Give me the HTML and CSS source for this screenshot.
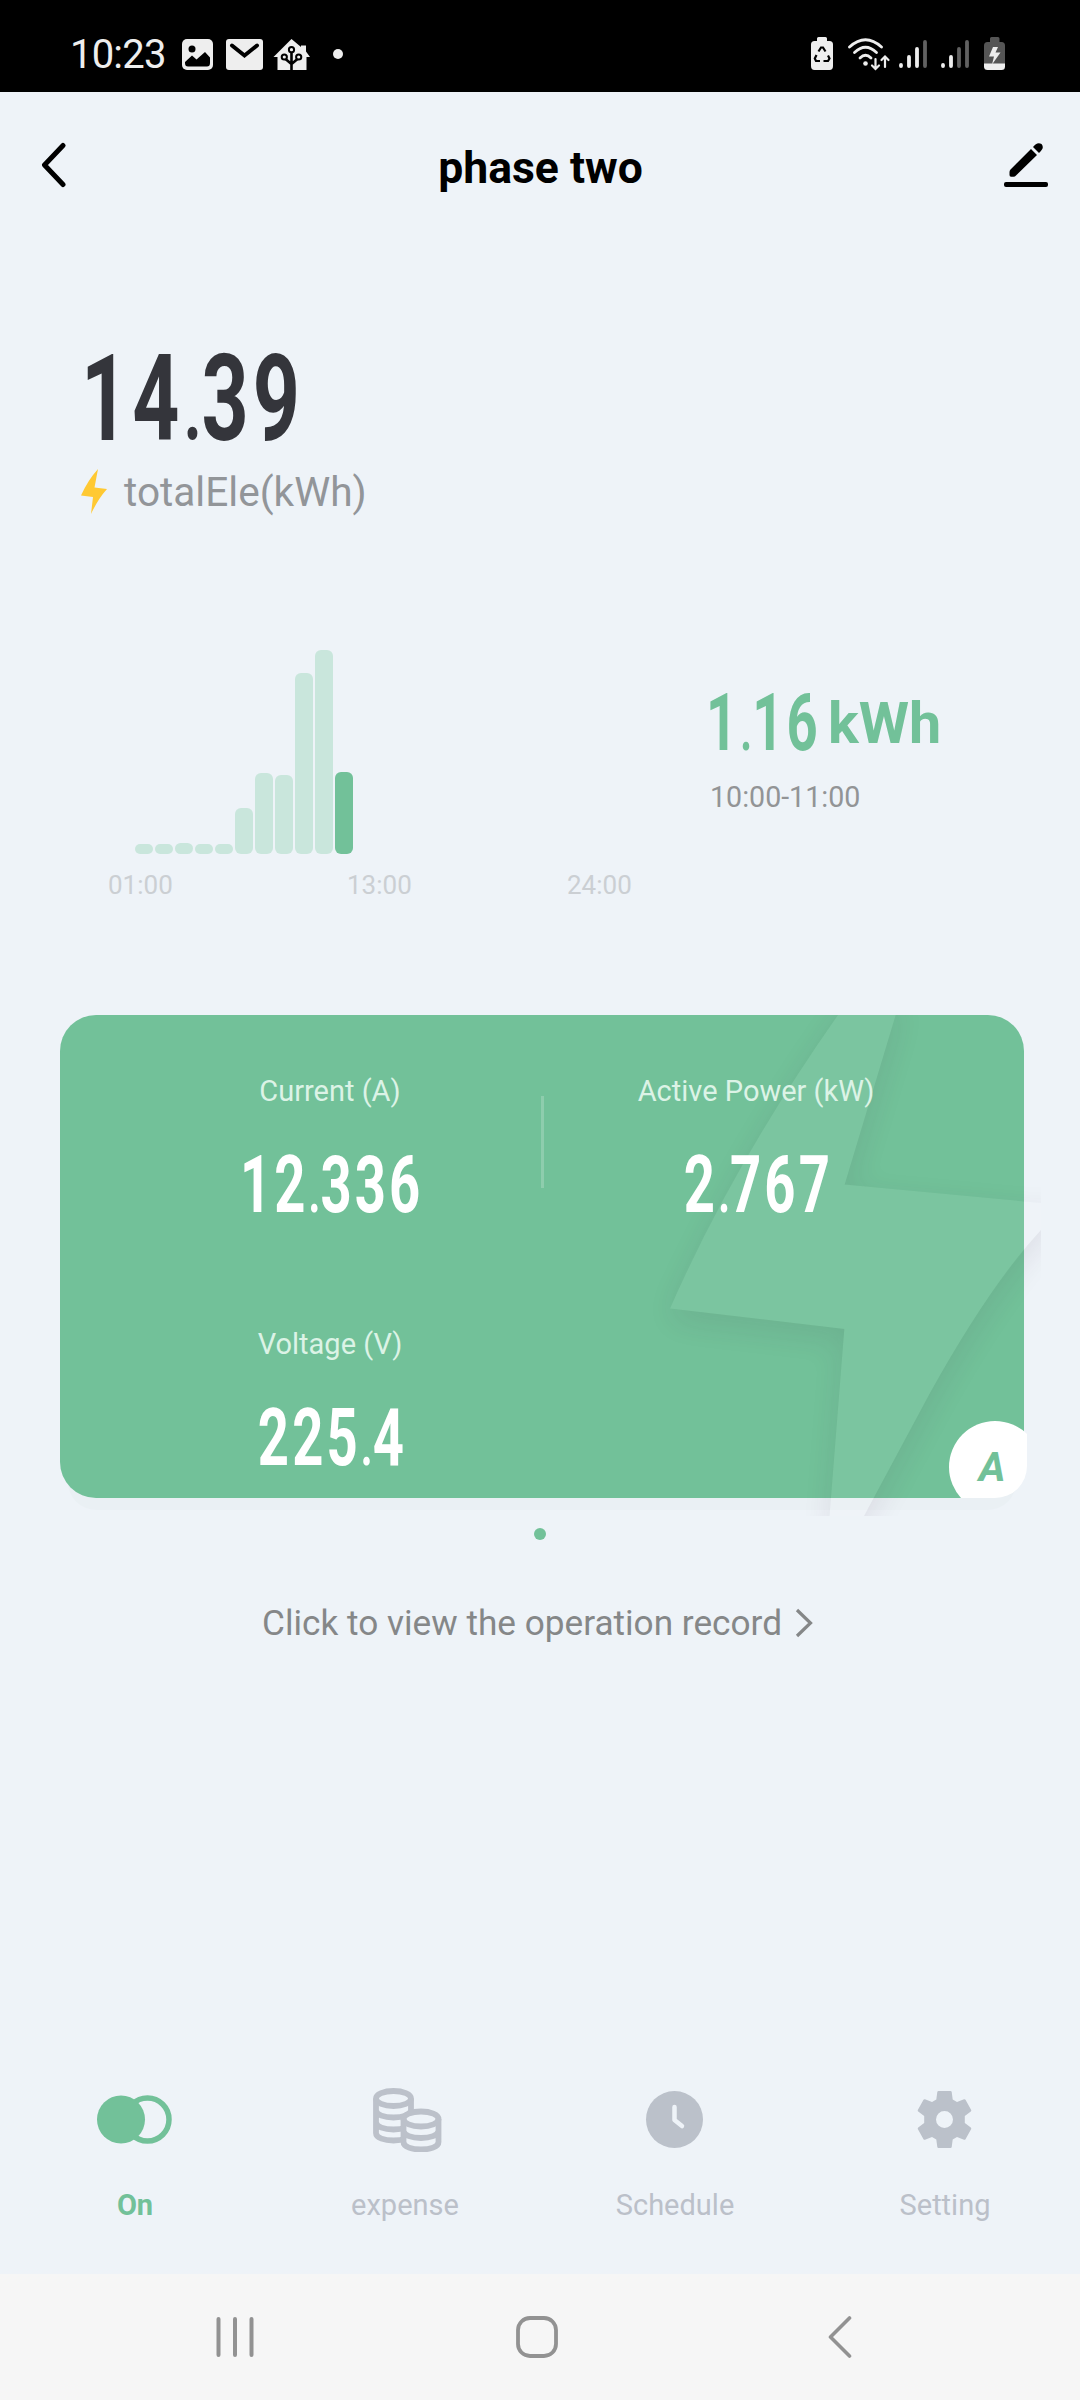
FILE: index.html
```html
<!DOCTYPE html>
<html lang="en">
<head>
  <meta charset="UTF-8">
  <meta name="viewport" content="width=device-width, initial-scale=1.0">
  <title>phase two</title>
  <link rel="stylesheet" href="styles.css">
</head>
<body>

  <div class="status-bar">
    <span class="time">10:23</span>
    <svg class="notifications" width="162" height="34" viewBox="0 0 162 34">
      <rect x="0" y="2" width="31" height="31" rx="5" fill="#eee"/>
      <circle cx="10" cy="12" r="3.5"/>
      <path d="M3 25 L10 18.500 L14.500 22.500 L23 15 L28 20.500 V26 Q28 29.500 25 29.500 H6 Q3 29.500 3 26 Z"/>
      <rect x="44" y="2" width="37" height="31" rx="3" fill="#eee"/>
      <path d="M50 8.500 L62.500 18.500 L75 8.500" fill="none" stroke="#000" stroke-width="4" stroke-linecap="round"/>
      <path d="M109.500 2 L119 10 V8.500 H124 V14.500 L128 20 H124.500 V33 H95.500 V20 H91.500 Z" fill="#eee"/>
      <g fill="none" stroke="#000" stroke-width="2">
        <path d="M109.500 16 V33 M103.500 22 L109.500 27 L115.500 22" stroke-width="2.600"/>
        <circle cx="109.500" cy="12.700" r="2.600" fill="#eee"/>
        <circle cx="102.300" cy="20" r="2.600" fill="#eee"/>
        <circle cx="116.700" cy="20" r="2.600" fill="#eee"/>
      </g>
      <circle cx="156" cy="17" r="5" fill="#eee"/>
    </svg>

    <svg class="system-icons" width="196" height="34" viewBox="0 0 196 34">
      <path d="M6 4 V1.500 Q6 0 7.500 0 H14.500 Q16 0 16 1.500 V4 H18.500 Q22 4 22 7.500 V29 Q22 33 18.500 33 H3.500 Q0 33 0 29 V7.500 Q0 4 3.500 4 Z" fill="#eee"/>
      <path d="M7.500 14.500 L10 10.500 H12 L14.500 14.500 M17 18.500 L18.500 21.500 L17 24 H12.500 M9 24 H5 L3.800 21.500 L5.500 18" fill="none" stroke="#000" stroke-width="2.200"/>
      <g fill="none" stroke="#eee" stroke-width="2.800" stroke-linecap="round">
        <path d="M38.500 10 Q54.500 -4.500 70.500 10"/>
        <path d="M43.500 15.500 Q54.500 5 65.500 15.500"/>
        <path d="M49 21 Q54.500 15.500 60 21"/>
        <path d="M64.500 22 V31 M61 28.500 L64.500 32 L68 28.500" stroke-width="2.200"/>
        <path d="M74 30 V20 M70.500 23 L74 19.500 L77.500 23" stroke-width="2.200"/>
      </g>
      <circle cx="54.500" cy="26.500" r="2.300" fill="#eee"/>
      <g stroke-width="3.800" stroke-linecap="round">
        <path d="M90 28 V29 M98 20 V29 M106 12 V29" stroke="#eee"/>
        <path d="M114 5 V29" stroke="#616161"/>
        <path d="M132 28 V29 M140 20 V29" stroke="#eee"/>
        <path d="M148 12 V29 M156 5 V29" stroke="#616161"/>
      </g>
      <path d="M179 5 V1.500 Q179 0 180.500 0 H187 Q188.500 0 188.500 1.500 V5 H190.500 Q194 5 194 8.500 V27 H173 V8.500 Q173 5 176.500 5 Z" fill="#555"/>
      <path d="M173 26.500 H194 V29.500 Q194 33 190.500 33 H176.500 Q173 33 173 29.500 Z" fill="#eee"/>
      <path d="M182 10 H187 L184.500 15.500 H189.500 L181 27.500 L183 19.500 H178 Z" fill="#eee"/>
    </svg>
  </div>

  <header class="page-header">
    <svg width="26" height="46" viewBox="0 0 26 46">
      <path d="M22 3.500 L3.500 23 L22 42.500" fill="none" stroke="#000" stroke-width="5" stroke-linecap="round" stroke-linejoin="round"/>
    </svg>
    <h1>phase two</h1>
    <svg width="44" height="46" viewBox="0 0 44 46">
      <path d="M27 7 L33 13 L12 33.500 Q11 34.700 9.500 34.700 H7 Q5.500 34.700 5.500 33 V30 Q5.500 28.500 6.500 27.500 Z"/>
      <path d="M29 5 Q33 -0.500 37.500 2 Q41 6 35 11 Z"/>
      <rect x="0" y="40" width="44" height="5" rx="2"/>
    </svg>
  </header>

  <main>
    <section class="total">
      <div class="digits total-value">14<span class="dot">.</span>39</div>
      <div class="total-label">
        <svg width="26" height="46" viewBox="0 0 26 46">
          <path d="M17 0 Q7 11 0 26.500 L12 28 L10 45 Q17 30 26 20 L13.500 18.500 Z" fill="#ffc933"/>
        </svg>
        <span>totalEle(kWh)</span>
      </div>
    </section>

    <section class="usage">
      <div class="chart">
        <div class="bars">
          <i style="height: 10px"></i>
          <i style="height: 10px"></i>
          <i style="height: 11px"></i>
          <i style="height: 10px"></i>
          <i style="height: 10px"></i>
          <i style="height: 46px"></i>
          <i style="height: 81px"></i>
          <i style="height: 79px"></i>
          <i style="height: 181px"></i>
          <i style="height: 204px"></i>
          <i class="active" style="height: 82px"></i>
        </div>
        <div class="axis">
          <span>01:00</span>
          <span>13:00</span>
          <span>24:00</span>
        </div>
      </div>
      <div class="selected">
        <div class="selected-value">
          <span class="digits">1<span class="dot">.</span>16</span>
          <span class="unit">kWh</span>
        </div>
        <div class="selected-range">10:00-11:00</div>
      </div>
    </section>

    <section class="card">
      <svg class="card-bolt" width="441" height="501" viewBox="600 1015 441 501">
        <defs>
          <path id="bolt" d="M848 1000 L838 1015 Q734 1163 670 1308.500 L844.300 1329 L829.500 1516 L826 1560 L842 1560 L864 1516 L930 1393 Q990 1285 1041 1230 L1070 1198 L1041 1203 L844.700 1184.600 L895.700 1015 L900 1000 Z"/>
          <filter id="blur" x="-30%" y="-30%" width="160%" height="160%">
            <feGaussianBlur stdDeviation="15"/>
          </filter>
          <mask id="outside" maskUnits="userSpaceOnUse" x="600" y="1015" width="441" height="501">
            <rect x="600" y="1015" width="441" height="501" fill="#fff"/>
            <use href="#bolt" fill="#000"/>
          </mask>
        </defs>
        <g mask="url(#outside)">
          <use href="#bolt" y="10" fill="#402040" opacity=".09" filter="url(#blur)"/>
        </g>
        <use href="#bolt" fill="#fff" opacity=".07"/>
      </svg>
      <div class="badge-clip"><div class="badge">A</div></div>
      <div class="readings">
        <div class="reading">
          <div class="reading-label">Current (A)</div>
          <div class="digits">12<span class="dot">.</span>336</div>
        </div>
        <div class="reading divided">
          <div class="reading-label">Active Power (kW)</div>
          <div class="digits">2<span class="dot">.</span>767</div>
        </div>
        <div class="reading">
          <div class="reading-label">Voltage (V)</div>
          <div class="digits">225<span class="dot">.</span>4</div>
        </div>
      </div>
    </section>

    <div class="pager"></div>

    <a class="record-link">
      <span>Click to view the operation record</span>
      <svg width="18" height="30" viewBox="0 0 18 30">
        <path d="M2 2 L15.500 15 L2 28" fill="none" stroke="#858788" stroke-width="3.200"/>
      </svg>
    </a>
  </main>

  <nav class="tabs">
    <div class="tab active">
      <svg width="76" height="66" viewBox="0 0 76 66">
        <circle cx="50.500" cy="33.500" r="21.500" fill="none" stroke="#72c199" stroke-width="5.500"/>
        <circle cx="24" cy="33.500" r="24" fill="#72c199"/>
      </svg>
      <span>On</span>
    </div>
    <div class="tab">
      <svg width="76" height="66" viewBox="2 0 76 66">
        <g fill="none" stroke="#bcc1ca" stroke-width="5.800">
          <ellipse cx="28.500" cy="12.500" rx="17.500" ry="7.500"/>
          <path d="M11 12.500 V47 C11 57 46 57 46 47 V12.500 M11 24 C11 34 46 34 46 24 M11 36 C11 46 46 46 46 36"/>
          <path d="M38.500 33 V56 C38.500 66 73.500 66 73.500 56 V33 Z" fill="#eef3f8" stroke="none"/>
          <ellipse cx="56" cy="33" rx="17.500" ry="7.500" fill="#eef3f8"/>
          <path d="M38.500 33 V56 C38.500 66 73.500 66 73.500 56 V33 M38.500 44.500 C38.500 54.500 73.500 54.500 73.500 44.500"/>
        </g>
      </svg>
      <span>expense</span>
    </div>
    <div class="tab">
      <svg width="76" height="66" viewBox="0 0 76 66">
        <circle cx="37.500" cy="33.500" r="28.500" fill="#bbc1ca"/>
        <path d="M37.500 21 V34 L45 40" fill="none" stroke="#eef3f8" stroke-width="4.500" stroke-linecap="round" stroke-linejoin="round"/>
      </svg>
      <span>Schedule</span>
    </div>
    <div class="tab">
      <svg width="76" height="66" viewBox="0.500 0 76 66">
        <path fill-rule="evenodd" d="M32 5 H44 Q45 5 45.200 6 L46.200 13.500 L50.500 16 L57.500 13.300 Q58.500 13 59 13.800 L64.700 24 Q65 25 64.300 25.500 L58.300 30 V37 L64.300 41.500 Q65 42 64.700 43 L59 53.200 Q58.500 54 57.500 53.700 L50.500 51 L46.200 53.500 L45.200 61 Q45 62 44 62 H32 Q31 62 30.800 61 L29.800 53.500 L25.500 51 L18.500 53.700 Q17.500 54 17 53.200 L11.300 43 Q11 42 11.700 41.500 L17.700 37 V30 L11.700 25.500 Q11 25 11.300 24 L17 13.800 Q17.500 13 18.500 13.300 L25.500 16 L29.800 13.500 L30.800 6 Q31 5 32 5 Z M38 25 A8.500 8.500 0 1 0 38 42 A8.500 8.500 0 1 0 38 25 Z" fill="#bbc1ca"/>
      </svg>
      <span>Setting</span>
    </div>
  </nav>

  <div class="system-nav">
    <svg width="38" height="44" viewBox="0 0 38 44">
      <path d="M2.500 4 V40 M19 4 V40 M35.500 4 V40" stroke="#929292" stroke-width="4" stroke-linecap="round"/>
    </svg>
    <svg class="home" width="42" height="44" viewBox="0 0 42 44">
      <rect x="2" y="3" width="38" height="38" rx="12" fill="none" stroke="#929292" stroke-width="3.800"/>
    </svg>
    <svg width="24" height="44" viewBox="0 0 24 44">
      <path d="M21.500 3 L2.500 22 L21.500 41" fill="none" stroke="#929292" stroke-width="3.600" stroke-linecap="round" stroke-linejoin="round"/>
    </svg>
  </div>

</body>
</html>
```
FILE: styles.css
```css
* {
  box-sizing: border-box;
}

body {
  margin: 0;
  width: 1080px;
  height: 2400px;
  display: flex;
  flex-direction: column;
  background: #eef3f8;
  font-family: Roboto, "Noto Sans", sans-serif;
  overflow: hidden;
}

svg {
  display: block;
  flex: none;
}

/* status bar */
.status-bar {
  height: 92px;
  padding: 16px 73px 0 70px;
  display: flex;
  align-items: center;
  background: #000;
}

.time {
  width: 112px;
  padding-top: 2px;
  font-size: 40px;
  line-height: 40px;
  letter-spacing: -0.8px;
  color: #eee;
}

.system-icons {
  margin-left: auto;
}

/* page header */
.page-header {
  height: 150px;
  padding: 0 32px 4px 41px;
  display: flex;
  align-items: center;
  justify-content: space-between;
}

.page-header h1 {
  margin: 6px 0 0 10px;
  font-size: 44.5px;
  line-height: 52px;
  font-weight: bold;
  color: #000;
}

main {
  flex: 1;
}

/* narrow numerals */
.digits {
  display: inline-block;
  font-size: 80px;
  line-height: 86px;
  font-weight: bold;
  letter-spacing: 0.0575em;
  white-space: nowrap;
  transform: scaleX(0.68);
}

.dot {
  font-size: 0.75em;
  letter-spacing: 0;
}

/* total */
.total {
  height: 378px;
  padding: 96px 0 0 81px;
}

.total-value {
  display: block;
  height: 124px;
  font-size: 121px;
  line-height: 122px;
  letter-spacing: 0.05em;
  color: #34353b;
  transform-origin: left;
}

.total-label {
  margin-top: 5px;
  display: flex;
  align-items: center;
  gap: 17px;
  font-size: 40.6px;
  line-height: 50px;
  color: #929599;
}

/* usage chart */
.usage {
  height: 395px;
  display: flex;
}

.chart {
  width: 632px;
  padding-left: 108px;
}

.bars {
  height: 234px;
  padding-left: 27px;
  display: flex;
  align-items: flex-end;
  gap: 2px;
}

.bars i {
  width: 18px;
  border-radius: 6px;
  background: #c9e6dc;
}

.bars i.active {
  background: #72c199;
}

.axis {
  margin-top: 15px;
  display: grid;
  grid-template-columns: 239px 220px auto;
  font-size: 26px;
  line-height: 32px;
  color: #cbcfd3;
}

.selected {
  padding: 60px 0 0 74px;
}

.selected-value {
  height: 80px;
  display: flex;
  color: #72c199;
}

.selected-value .digits {
  width: 122px;
  transform-origin: left;
}

.unit {
  font-size: 57.5px;
  line-height: 87px;
  font-weight: bold;
}

.selected-range {
  margin-top: 20px;
  padding-left: 4px;
  font-size: 28.6px;
  line-height: 35px;
  color: #929496;
}

/* readings card */
.card {
  position: relative;
  width: 964px;
  height: 483px;
  margin-left: 59.5px;
  border-radius: 36px;
  background: #72c199;
  box-shadow: 0 20px 0 -8px #eaf0f4;
}

.card-bolt {
  position: absolute;
  top: 0;
  right: -17.5px;
}

.badge-clip {
  position: absolute;
  right: -3.5px;
  bottom: 0;
  width: 80px;
  height: 80px;
  border-radius: 0 0 32px 0;
  overflow: hidden;
}

.badge {
  width: 92px;
  height: 92px;
  margin: 3px 0 0 2px;
  padding-right: 6px;
  border-radius: 50%;
  background: #fff;
  color: #72c199;
  font-size: 41px;
  line-height: 92px;
  font-weight: bold;
  font-style: italic;
  text-align: center;
}

.readings {
  position: relative;
  padding: 60px 57px 0 55px;
  display: grid;
  grid-template-columns: 1fr 1fr;
  grid-auto-rows: 253px;
}

.reading {
  padding-left: 5px;
  text-align: center;
  color: #fff;
}

.reading .digits {
  padding-left: 0.07em;
}

.reading-label {
  margin-bottom: 35px;
  font-size: 29px;
  line-height: 32px;
  color: #dcf3e6;
}

.divided {
  background: linear-gradient(#8ecdad, #8ecdad) 0 21px / 3px 92px no-repeat;
}

.pager {
  width: 12px;
  height: 12px;
  margin: 30px auto 0;
  border-radius: 50%;
  background: #72c199;
}

.record-link {
  margin: 62px 0 0 262px;
  display: flex;
  align-items: center;
  gap: 13px;
  font-size: 35.2px;
  line-height: 42px;
  color: #858788;
}

/* bottom tabs */
.tabs {
  height: 189px;
  display: grid;
  grid-template-columns: repeat(4, 1fr);
}

.tab {
  display: flex;
  flex-direction: column;
  align-items: center;
  gap: 36px;
  padding-top: 1px;
  font-size: 29px;
  line-height: 34px;
  color: #bbc0c9;
}

.tab.active {
  font-weight: bold;
  color: #72c199;
}

.system-nav {
  height: 126px;
  padding: 0 228px 0 216px;
  display: flex;
  align-items: center;
  justify-content: space-between;
  background: #f6f6f6;
}

.home {
  margin-right: 8px;
}
```
